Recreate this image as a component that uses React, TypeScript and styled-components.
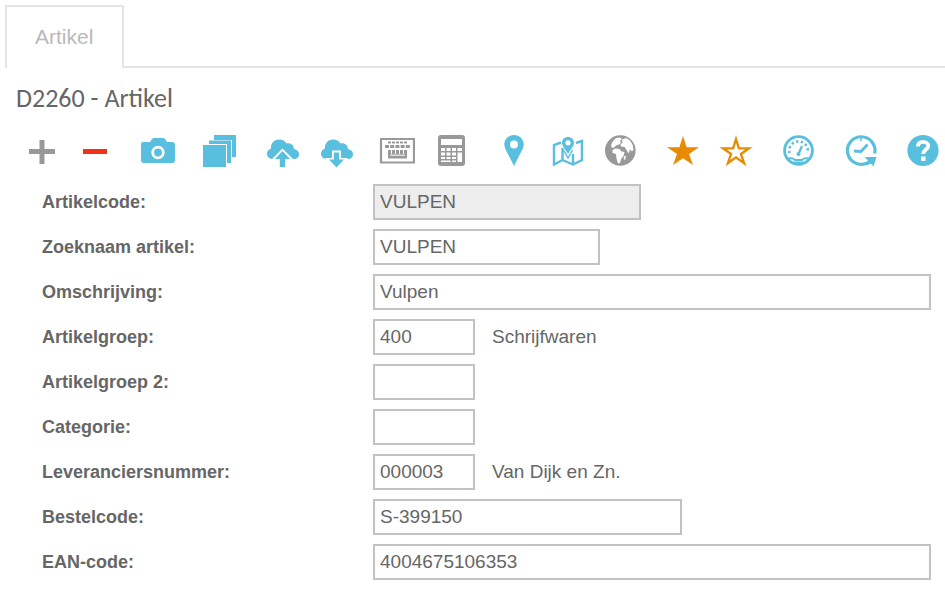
import React from "react";
import styled, { createGlobalStyle } from "styled-components";

const BLUE = "#58bfde";
const GREY = "#999999";
const ORANGE = "#e98b00";
const RED = "#f03316";

const GlobalStyle = createGlobalStyle`
  *, *::before, *::after { box-sizing: border-box; }
  body {
    margin: 0;
    background: #ffffff;
    color: #666666;
    font-family: "Liberation Sans", Arial, sans-serif;
  }
`;

const Page = styled.main`
  padding: 5px 0 14px;
`;

const TabBar = styled.nav`
  display: flex;
  padding-left: 5px;
`;

const Tab = styled.button`
  height: 63px;
  padding: 0 29px 2px 28px;
  border: 2px solid #e5e5e5;
  border-bottom: 0;
  background: #ffffff;
  color: #b9b9b9;
  font: 21px/24px "Liberation Sans", Arial, sans-serif;
`;

const TabRule = styled.div`
  flex: 1;
  border-bottom: 2px solid #e5e5e5;
`;

const Title = styled.h1`
  margin: 15px 16px 0;
  font: 400 26px/30px Carlito, Calibri, Lato, sans-serif;
`;

const Toolbar = styled.div`
  display: flex;
  gap: 26px;
  padding: 20px 0 0 23px;
`;

const ToolGroup = styled.div`
  display: flex;
  gap: 18px;
`;

const ToolButton = styled.button<{ $color: string }>`
  width: 36px;
  height: 36px;
  padding: 0;
  border: 0;
  background: transparent;
  color: ${(p) => p.$color};

  svg {
    display: block;
    width: 36px;
    height: 36px;
  }
`;

const Form = styled.form`
  display: grid;
  gap: 9px;
  padding: 15px 14px 0 42px;
`;

const Row = styled.div`
  display: grid;
  grid-template-columns: 331px 1fr;
  align-items: center;
`;

const Label = styled.label`
  padding-bottom: 1px;
  font-size: 18px;
  line-height: 24px;
  font-weight: 700;
`;

const Field = styled.div`
  display: flex;
  align-items: center;
  gap: 17px;
`;

const Input = styled.input<{ $width: string }>`
  width: ${(p) => p.$width};
  height: 36px;
  padding: 0 5px;
  border: 2px solid #c2c2c2;
  border-radius: 0;
  outline: 0;
  background: #ffffff;
  color: #666666;
  font: 19px/24px "Liberation Sans", Arial, sans-serif;

  &:read-only {
    background: #ededed;
  }
`;

const Description = styled.output`
  font-size: 19px;
  line-height: 24px;
`;

const CLOUD =
  "M10 26 C6 26 4 23.500 4 20.500 C4 18 6 16 8 15.500 C7.500 10.500 11 6.500 16 6.500 C19.500 6.500 22 8 23.500 10.500 C27.500 9.500 31 12 31 16 C34 16.500 36 18.500 36 21 C36 24 34 26 31 26 Z";

const STAR = "M18 3 L21.600 14.200 L34 14.200 L24 21 L28 32 L18 25.200 L8 32 L12 21 L2 14.200 L14.400 14.200 Z";

type Tool = { name: string; color: string; art: React.ReactNode };

const groups: Tool[][] = [
  [
    { name: "Toevoegen", color: GREY, art: <path d="M16.500 7h5v9H32v5H21.500v10h-5V21H6v-5h10.500z" fill="currentColor" /> },
    { name: "Verwijderen", color: RED, art: <path d="M6 16h24v5H6z" fill="currentColor" /> },
  ],
  [
    {
      name: "Foto",
      color: BLUE,
      art: (
        <>
          <path d="M4 9h7l2-3q1-1 2-1h9q1 0 2 1l2 3h5q3 0 3 3v15q0 3-3 3H5q-3 0-3-3V12q0-3 2-3z" fill="currentColor" />
          <circle cx="19" cy="19.500" r="5.300" fill="none" stroke="#fff" strokeWidth="2.800" />
        </>
      ),
    },
  ],
  [
    {
      name: "Kopiëren",
      color: BLUE,
      art: (
        <g fill="currentColor">
          <path d="M13 2h22v22h-4V7H13z" />
          <path d="M8 7.500h22V30h-4V11H8z" />
          <path d="M2 12h23v22H2z" />
        </g>
      ),
    },
  ],
  [
    {
      name: "Uploaden",
      color: BLUE,
      art: (
        <>
          <path d={CLOUD} fill="currentColor" />
          <path d="M19.500 15.500L30 26h-5v9H14v-9H9z" fill="#fff" />
          <path d="M19.500 18l7.500 8h-4.800v8h-5.400v-8H12z" fill="currentColor" />
        </>
      ),
    },
    {
      name: "Downloaden",
      color: BLUE,
      art: (
        <>
          <path d={CLOUD} fill="currentColor" />
          <path d="M15 17.500h9V25h6.500v4H8.500v-4H15z" fill="#fff" />
          <path d="M16.800 19.500h5.400v7H27L19.500 34.500 12 26.500h4.800z" fill="currentColor" />
        </>
      ),
    },
  ],
  [
    {
      name: "Toetsenbord",
      color: GREY,
      art: (
        <>
          <path d="M2 6h33v23.500H2z" fill="none" stroke="currentColor" strokeWidth="2.200" />
          <path d="M9 9.500h19" stroke="currentColor" strokeWidth="2" strokeDasharray="3 1" />
          <path d="M6 13.500h25" stroke="currentColor" strokeWidth="3" strokeDasharray="4 1.200" />
          <path d="M9 17h19v8.500H9z" fill="currentColor" />
          <path d="M12.500 16v5M16.500 16v5M20.500 16v5M24.500 16v5M11 22.200h15" stroke="#fff" strokeWidth="1" />
        </>
      ),
    },
    {
      name: "Rekenmachine",
      color: GREY,
      art: (
        <>
          <rect x="5" y="2" width="27" height="31" rx="3" fill="currentColor" />
          <path d="M8 6h21v6H8z" fill="#fff" />
          <g fill="#fff">
            <path d="M8 15h4v3H8zM13.500 15h4v3h-4zM19 15h4v3h-4zM24.500 15H29v3h-4.500z" />
            <path d="M8 19.500h4v3H8zM13.500 19.500h4v3h-4zM19 19.500h4v3h-4zM24.500 19.500H29V29h-4.500z" />
            <path d="M8 24h4v2H8zM13.500 24h4v2h-4zM19 24h4v2h-4z" />
            <path d="M8 27.500h9.500V29H8zM19 27.500h4V29h-4z" />
          </g>
        </>
      ),
    },
  ],
  [
    {
      name: "Locatie",
      color: BLUE,
      art: (
        <path
          fillRule="evenodd"
          fill="currentColor"
          d="M19 2c5.500 0 9.700 4.200 9.700 9.500 0 4-3 8-5.200 12.500L19 33l-4.500-9C12.300 19.500 9.300 15.500 9.300 11.500 9.300 6.200 13.500 2 19 2zM19 7.500a4 4 0 1 0 0 8 4 4 0 0 0 0-8z"
        />
      ),
    },
    {
      name: "Kaart",
      color: BLUE,
      art: (
        <>
          <path
            d="M12 9.500L5 12v19.500l8.500-4.500 10.500 4.500 9-4.500V8l-6 2M13.500 15v12M24 21v10"
            fill="none"
            stroke="currentColor"
            strokeWidth="2.400"
          />
          <path
            fillRule="evenodd"
            fill="currentColor"
            d="M19 4c3.500 0 6 2.400 6 5.700 0 3.500-3.700 7-6 11.300-2.300-4.300-6-7.800-6-11.300C13 6.400 15.500 4 19 4zm0 3.200a2.600 2.600 0 1 0 0 5.200 2.600 2.600 0 0 0 0-5.200z"
          />
          <path d="M14.500 17l4.500 8 4.500-8" fill="none" stroke="currentColor" strokeWidth="1.500" />
        </>
      ),
    },
    {
      name: "Wereld",
      color: GREY,
      art: (
        <>
          <circle cx="17.300" cy="17.500" r="15.300" fill="currentColor" />
          <g fill="#fff">
            <path d="M10 8l3-3 4-.500 2 1.500-2 2 1 1.500-2 2-3 1-2 2-2 .500-1-3z" />
            <path d="M9.500 17l3-1.500 4 .5 2 2.500 3 .5-1 4-2.500 3-1 4-2 .5-1.500-5-.5-4.500-3.500-1z" />
            <path d="M19 6.500l4-1.500 4 2.500 2.500 4 1 5-1.500 2-2-2-1.500 4-2-3.500-2-3-3.500-.5-.5-2.500 2-1z" />
            <path d="M21.500 22.500l1.500 1-1 3.500-1.500-1z" />
          </g>
        </>
      ),
    },
  ],
  [
    { name: "Favoriet", color: ORANGE, art: <path d={STAR} fill="currentColor" /> },
    {
      name: "Favorieten",
      color: ORANGE,
      art: (
        <path
          d="M17 6l2.900 9.300h10l-8 5.700 3.200 9.200-8.100-5.900-8.100 5.900 3.200-9.200-8-5.700h10z"
          fill="none"
          stroke="currentColor"
          strokeWidth="2.300"
        />
      ),
    },
  ],
  [
    {
      name: "Dashboard",
      color: BLUE,
      art: (
        <g fill="none" stroke="currentColor">
          <circle cx="17.500" cy="17.500" r="13.900" strokeWidth="2.800" />
          <path d="M8.500 20a9.300 9.300 0 1 1 18 0" strokeWidth="2.600" strokeDasharray="2.200 2.600" />
          <path d="M7 25.500q5-1 7 1.500h7q2-2.500 7-1.500M12 29.500h11" strokeWidth="2" />
          <circle cx="17.500" cy="21" r="2" fill="currentColor" stroke="none" />
          <path d="M17.500 21l3.500-8" strokeWidth="2.200" />
        </g>
      ),
    },
  ],
  [
    {
      name: "Historie",
      color: BLUE,
      art: (
        <>
          <path d="M31.700 20.500A13.800 13.800 0 1 0 23.500 30.300" fill="none" stroke="currentColor" strokeWidth="3.200" />
          <path d="M21.500 24H33.500L30.500 33.500 28 30.500 23.500 32.500 21.500 30.500 25 27.500z" fill="currentColor" />
          <path d="M24.500 11.500L18 18.500l-7-.500" fill="none" stroke="currentColor" strokeWidth="2.800" />
          <path d="M18 5v3" stroke="currentColor" strokeWidth="1.500" />
        </>
      ),
    },
  ],
  [
    {
      name: "Help",
      color: BLUE,
      art: (
        <>
          <circle cx="18" cy="17.500" r="15.600" fill="currentColor" />
          <path
            d="M13 13.500c0-3 2-4.700 5-4.700s5.200 1.700 5.200 4.200c0 3.500-5 3.700-5 8"
            fill="none"
            stroke="#fff"
            strokeWidth="3.800"
          />
          <path d="M16 23.500h4.500V28H16z" fill="#fff" />
        </>
      ),
    },
  ],
];

type FieldDef = {
  id: string;
  label: string;
  value: string;
  width: string;
  readOnly?: boolean;
  description?: string;
};

const fields: FieldDef[] = [
  { id: "artikelcode", label: "Artikelcode:", value: "VULPEN", width: "268px", readOnly: true },
  { id: "zoeknaam", label: "Zoeknaam artikel:", value: "VULPEN", width: "227px" },
  { id: "omschrijving", label: "Omschrijving:", value: "Vulpen", width: "100%" },
  { id: "artikelgroep", label: "Artikelgroep:", value: "400", width: "102px", description: "Schrijfwaren" },
  { id: "artikelgroep2", label: "Artikelgroep 2:", value: "", width: "102px" },
  { id: "categorie", label: "Categorie:", value: "", width: "102px" },
  { id: "leverancier", label: "Leveranciersnummer:", value: "000003", width: "102px", description: "Van Dijk en Zn." },
  { id: "bestelcode", label: "Bestelcode:", value: "S-399150", width: "309px" },
  { id: "ean", label: "EAN-code:", value: "4004675106353", width: "100%" },
];

export default function App() {
  return (
    <Page>
      <GlobalStyle />
      <TabBar>
        <Tab type="button">Artikel</Tab>
        <TabRule />
      </TabBar>
      <Title>D2260 - Artikel</Title>
      <Toolbar role="toolbar">
        {groups.map((group) => (
          <ToolGroup key={group[0].name}>
            {group.map((tool) => (
              <ToolButton key={tool.name} type="button" aria-label={tool.name} $color={tool.color}>
                <svg viewBox="0 0 36 36" aria-hidden="true">
                  {tool.art}
                </svg>
              </ToolButton>
            ))}
          </ToolGroup>
        ))}
      </Toolbar>
      <Form>
        {fields.map((f) => (
          <Row key={f.id}>
            <Label htmlFor={f.id}>{f.label}</Label>
            <Field>
              <Input id={f.id} type="text" defaultValue={f.value} readOnly={f.readOnly} $width={f.width} />
              {f.description && <Description htmlFor={f.id}>{f.description}</Description>}
            </Field>
          </Row>
        ))}
      </Form>
    </Page>
  );
}
